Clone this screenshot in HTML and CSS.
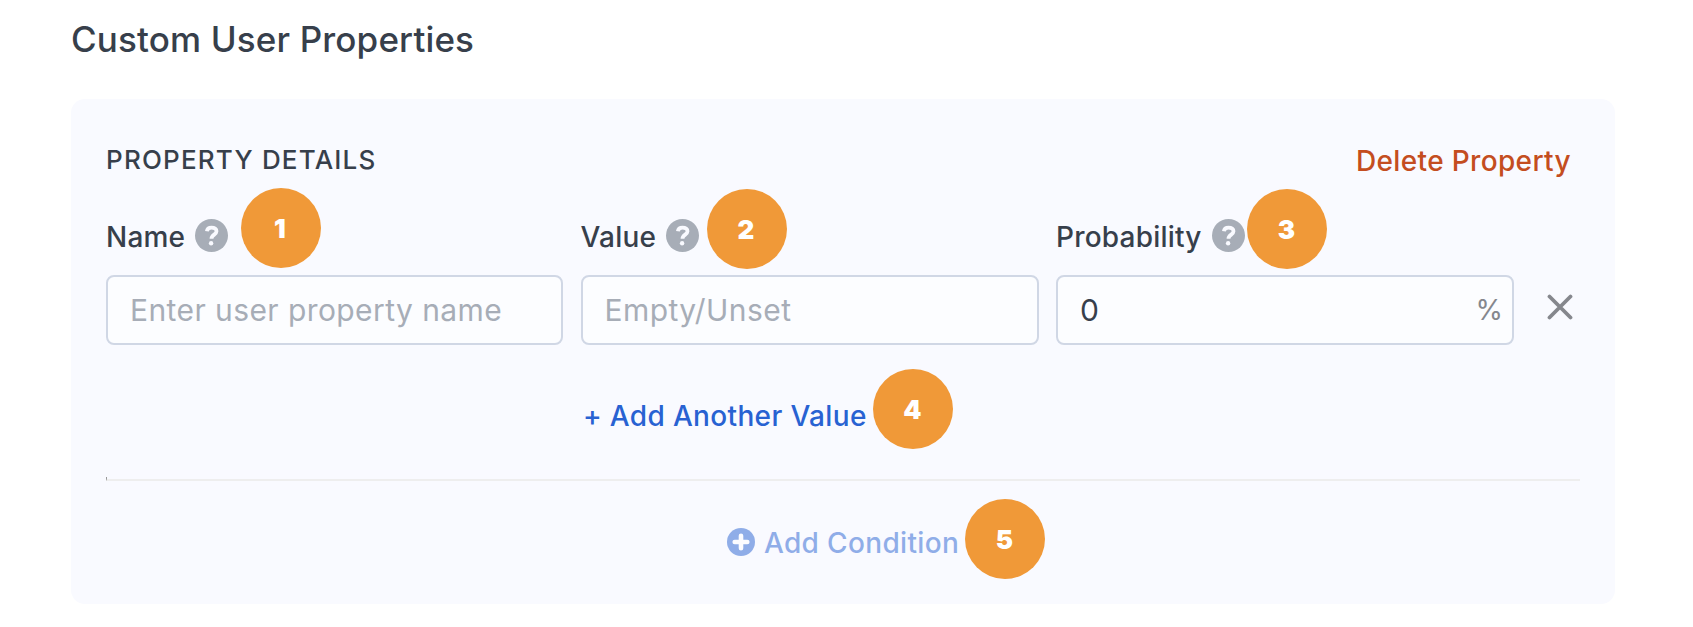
FILE: index.html
```html
<!DOCTYPE html>
<html lang="en">

<head>
  <meta charset="UTF-8">
  <meta name="viewport" content="width=device-width, initial-scale=1.0">
  <title>Custom User Properties</title>
  <link rel="stylesheet" href="styles.css">
</head>

<body>
  <h1>Custom User Properties</h1>

  <section class="card">
    <header class="card-header">
      <h2>PROPERTY DETAILS</h2>
      <button class="delete-button"><span>Delete Property</span></button>
    </header>

    <div class="row">
      <div class="fields">
        <div class="field">
          <div class="label">
            <label for="name">Name</label>
            <svg class="help" viewBox="0 0 33 33"><circle cx="16.5" cy="16.5" r="16.5"/><path d="M11.9 12.3C12.2 9.8 14 8.6 16.6 8.6c2.9 0 4.900 1.400 4.900 3.700 0 3.400-5 3.300-5 7.400"/><circle class="dot" cx="16.1" cy="24.3" r="2.2"/></svg>
            <span class="badge badge-1">1</span>
          </div>
          <input id="name" type="text" placeholder="Enter user property name">
        </div>
        <div class="field">
          <div class="label">
            <label for="value">Value</label>
            <svg class="help" viewBox="0 0 33 33"><circle cx="16.5" cy="16.5" r="16.5"/><path d="M11.9 12.3C12.2 9.8 14 8.6 16.6 8.6c2.9 0 4.900 1.400 4.900 3.700 0 3.400-5 3.300-5 7.400"/><circle class="dot" cx="16.1" cy="24.3" r="2.2"/></svg>
            <span class="badge badge-2">2</span>
          </div>
          <input id="value" type="text" placeholder="Empty/Unset">
        </div>
        <div class="field">
          <div class="label">
            <label for="probability">Probability</label>
            <svg class="help" viewBox="0 0 33 33"><circle cx="16.5" cy="16.5" r="16.5"/><path d="M11.9 12.3C12.2 9.8 14 8.6 16.6 8.6c2.9 0 4.900 1.400 4.900 3.700 0 3.400-5 3.300-5 7.400"/><circle class="dot" cx="16.1" cy="24.3" r="2.2"/></svg>
            <span class="badge badge-3">3</span>
          </div>
          <div class="percent">
            <input id="probability" type="text" value="0">
            <span class="unit">%</span>
          </div>
        </div>
      </div>
      <button class="remove" aria-label="Remove">
        <svg viewBox="0 0 26 26"><path d="M2.5 2.5l21 21M23.5 2.5l-21 21"/></svg>
      </button>
    </div>

    <div class="add-value">
      <button class="link"><span>+ Add Another Value</span></button>
      <span class="badge badge-4">4</span>
    </div>

    <hr>

    <div class="add-condition">
      <button class="link disabled">
        <svg viewBox="0 0 28 28"><circle cx="14" cy="14" r="14"/><path d="M14 7.7v12.6M7.7 14h12.6"/></svg>
        <span>Add Condition</span>
      </button>
      <span class="badge badge-5">5</span>
    </div>
  </section>
</body>

</html>
```
FILE: styles.css
```css
* {
  box-sizing: border-box;
}

body {
  font-family: Inter, sans-serif;
  margin: 0;
  padding: 17px 78px 0 71px;
  background-color: #fff;
  color: #373f4b;
  overflow: hidden;
}

h1 {
  margin: 0 0 38px;
  font-size: 35px;
  font-weight: 500;
  line-height: 44px;
  letter-spacing: 0.15px;
}

button {
  padding: 0;
  border: none;
  background: none;
  font-family: inherit;
  cursor: pointer;
}

.card {
  height: 505px;
  padding: 43px 35px 0;
  border-radius: 14px;
  background-color: #f9faff;
}

.card-header {
  display: flex;
  justify-content: space-between;
  align-items: flex-start;
  height: 40px;
  padding-right: 9px;
}

h2 {
  margin: 0;
  font-size: 26px;
  font-weight: 500;
  line-height: 36px;
  letter-spacing: 1.2px;
}

.delete-button {
  color: #c44d20;
  font-size: 28px;
  font-weight: 500;
  line-height: 38px;
  letter-spacing: 0.35px;
}

.row {
  display: flex;
  align-items: flex-end;
  margin-top: 30px;
}

.fields {
  display: grid;
  grid-template-columns: 457px 458px 458px;
  column-gap: 17.5px;
  width: 1408px;
}

.label {
  position: relative;
  display: flex;
  align-items: center;
  gap: 10px;
  height: 50px;
  margin-bottom: 13px;
  font-size: 28px;
  font-weight: 500;
  letter-spacing: 0.2px;
}

.help {
  width: 33px;
  height: 33px;
  margin-bottom: 3px;
  fill: #a7adb7;
}

.help path {
  fill: none;
  stroke: #f9faff;
  stroke-width: 3.8;
}

.help .dot {
  fill: #f9faff;
}

input {
  display: block;
  width: 100%;
  height: 70px;
  padding: 0 22px 1px;
  border: 2px solid #d0d7e5;
  border-radius: 8px;
  background-color: #fcfdff;
  color: #373f4b;
  font-family: inherit;
  font-size: 30px;
  letter-spacing: 0.42px;
}

input::placeholder {
  color: #a7adb7;
  opacity: 1;
}

.percent {
  position: relative;
}

.unit {
  position: absolute;
  top: 0;
  right: 11px;
  color: #85878d;
  font-size: 28px;
  line-height: 70px;
}

.remove {
  width: 26px;
  height: 26px;
  margin: 0 0 25px 33px;
}

.remove svg {
  display: block;
  fill: none;
  stroke: #85878d;
  stroke-width: 3.8;
  stroke-linecap: round;
}

.link {
  display: flex;
  align-items: center;
  color: #2862d2;
  font-size: 28px;
  font-weight: 500;
  line-height: 40px;
  letter-spacing: 0.34px;
}

.add-value {
  position: relative;
  margin: 51px 0 0 477px;
}

hr {
  height: 4px;
  margin: 41px 0 0;
  border: 0 solid #eee;
  border-bottom-width: 2px;
  border-left: 1px solid #999;
}

.add-condition {
  position: relative;
  margin: 42px 0 0 621px;
}

.disabled {
  gap: 9px;
  opacity: 0.5;
}

.disabled svg {
  width: 28px;
  height: 28px;
  margin-bottom: 2px;
  fill: #2862d2;
}

.disabled path {
  stroke: #fff;
  stroke-width: 4.6;
  stroke-linecap: round;
}

/* numbered callouts */
.badge {
  position: absolute;
  width: 80px;
  height: 80px;
  padding-right: 1px;
  border-radius: 50%;
  background-color: #f09938;
  color: #fff;
  font-size: 26px;
  font-weight: 900;
  line-height: 81px;
  letter-spacing: 0;
  text-align: center;
}

.badge-1 {
  top: -24px;
  left: 134.5px;
}

.badge-2 {
  top: -23px;
  left: 126px;
}

.badge-3 {
  top: -23px;
  left: 191px;
}

.badge-4 {
  top: -27px;
  left: 290px;
}

.badge-5 {
  top: -24px;
  left: 238px;
}
```
